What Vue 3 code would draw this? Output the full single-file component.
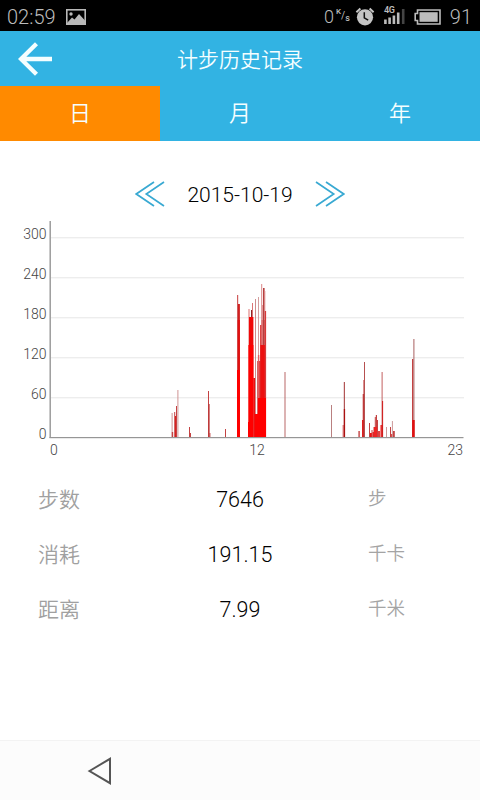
<template>
  <div class="screen">
    <div class="status-bar">
      <span class="clock">02:59</span>
      <svg class="pic-icon" viewBox="0 0 20 16" width="20" height="16">
        <rect x="0.8" y="0.8" width="18.4" height="14.4" fill="none" stroke="#b8b8b8" stroke-width="1.6" />
        <circle cx="5" cy="5" r="1.7" fill="#b8b8b8" />
        <path d="M1 14L6 8.5L8.5 10.5L13 5L19 11.5V15H1Z" fill="#b8b8b8" />
      </svg>
      <span class="speed">0</span>
      <span class="unit"><i>K</i><b>/</b><i class="sec">s</i></span>
      <svg class="alarm" viewBox="0 0 20 19" width="20" height="19">
        <circle cx="10" cy="10.3" r="8.1" fill="#c4c4c4" />
        <path d="M1.4 5.2L5.4 1.6M18.6 5.2L14.6 1.6" stroke="#c4c4c4" stroke-width="2" />
        <path d="M9.3 5.2V10.8L13.2 13.2" fill="none" stroke="#111" stroke-width="1.5" />
      </svg>
      <div class="signal">
        <span class="net">4G</span>
        <svg viewBox="0 0 22 17" width="22" height="17">
          <path d="M1.4 11.5V16M5.6 9.5V16M9.9 7.5V16M14.2 4.5V16" stroke="#bcbcbc" stroke-width="2.6" />
          <path d="M19.2 1V16" stroke="#444" stroke-width="2.6" />
        </svg>
      </div>
      <svg class="battery" viewBox="0 0 27 16" width="27" height="16">
        <path d="M3.5 1H26V15H3.5V11.5H1.2V4.5H3.5Z" fill="none" stroke="#bcbcbc" stroke-width="1.6" />
        <rect x="5.5" y="3.2" width="18.2" height="9.6" fill="#bcbcbc" />
      </svg>
      <span class="percent">91</span>
    </div>

    <div class="header">
      <svg class="back" viewBox="0 0 34 34" width="34" height="34">
        <path d="M18.5 1.8L3 17L18.5 32.2M3 17H34" fill="none" stroke="#f5feff" stroke-width="4.3" />
      </svg>
      <h1 class="title">计步历史记录</h1>
    </div>

    <div class="tabs">
      <div
        v-for="(tab, i) in tabs"
        :key="tab"
        class="tab"
        :class="{ active: activeTab === i }"
        @click="activeTab = i"
      >{{ tab }}</div>
    </div>

    <div class="date-row">
      <svg class="arrows" viewBox="0 0 30 26" width="30" height="26">
        <path d="M19 1L1.3 13L19 25M29 1L11.3 13L29 25" />
      </svg>
      <span class="date">2015-10-19</span>
      <svg class="arrows" viewBox="0 0 30 26" width="30" height="26">
        <path d="M1 1L18.7 13L1 25M11 1L28.7 13L11 25" />
      </svg>
    </div>

    <svg class="chart" viewBox="0 215 480 250" width="480" height="250">
      <g v-for="(v, i) in ticks" :key="v">
        <rect v-if="v" x="51" :y="437 - i * 40" width="413" height="1.4" fill="#ededed" />
        <text x="46.5" :y="438.5 - i * 40" text-anchor="end">{{ v }}</text>
      </g>
      <rect
        v-for="(b, i) in bars"
        :key="'b' + i"
        :x="b[0]"
        :y="b[1]"
        :width="b[2]"
        :height="437.5 - b[1]"
        :fill="b[3] || '#c44242'"
      />
      <rect x="49.5" y="221" width="1.4" height="217" fill="#969696" />
      <rect x="49.5" y="437" width="414" height="1.2" fill="#969696" />
      <text x="50" y="455">0</text>
      <text x="257" y="455" text-anchor="middle">12</text>
      <text x="463" y="455" text-anchor="end">23</text>
    </svg>

    <div class="stats">
      <div v-for="s in stats" :key="s.label" class="stat">
        <span class="label">{{ s.label }}</span>
        <span class="value">{{ s.value }}</span>
        <span class="stat-unit">{{ s.unit }}</span>
      </div>
    </div>

    <div class="nav-bar">
      <svg viewBox="0 0 26 30" width="26" height="30">
        <path d="M2.5 15L23 2.8V27.2Z" fill="none" stroke="#555" stroke-width="2" />
      </svg>
    </div>
  </div>
</template>

<script setup>
import { ref } from 'vue'

const tabs = ['日', '月', '年']
const activeTab = ref(0)

const ticks = [0, 60, 120, 180, 240, 300]

const stats = [
  { label: '步数', value: '7646', unit: '步' },
  { label: '消耗', value: '191.15', unit: '千卡' },
  { label: '距离', value: '7.99', unit: '千米' },
]

// x, top, width, color
const bars = [
  [171.6, 413, 1, '#cf9494'],
  [171.8, 432, 1.4],
  [174.2, 412, 1],
  [175, 416, 1.2, '#d82020'],
  [176, 406, 1],
  [177.4, 390, 1, '#cf9494'],
  [189, 427, 1],
  [190, 433, 1],
  [208, 391, 1],
  [208.6, 404, 1, '#b83030'],
  [209.4, 433, 1],
  [225, 429, 1],
  [237, 295, 1.2, '#d05c5c'],
  [238, 304, 1.9, '#d02020'],
  [237.7, 320, 2.1, '#e01010'],
  [237, 370, 2.9, '#f00'],
  [248.5, 309, 1, '#dd7474'],
  [248, 422, 2, '#f00'],
  [251, 310, 1.2, '#8e2626'],
  [252, 303, 1, '#dd7474'],
  [249, 317, 4.4, '#f00808'],
  [248.4, 345, 5, '#f00'],
  [253.3, 378, 1.8, '#ee1010'],
  [255.1, 299, 0.9, '#c98080'],
  [255, 414, 2, '#f00'],
  [257, 361, 1.2, '#d86060'],
  [258, 297, 0.9, '#cf9494'],
  [257.9, 355, 1.4, '#e06060'],
  [259.2, 361, 1.2, '#e02020'],
  [260.2, 325, 1.6, '#d81818'],
  [261.2, 284, 1, '#d88'],
  [261.8, 320, 3.2, '#e41818'],
  [262.2, 305, 1, '#d88'],
  [263, 288, 1.6, '#b54040'],
  [264.5, 291, 0.8, '#d88'],
  [264.8, 311, 1.3, '#d83838'],
  [260.4, 345, 4.4, '#ec1010'],
  [258, 398, 8, '#f00'],
  [257, 414, 2, '#f00'],
  [284.5, 372, 1, '#b96868'],
  [331, 405, 1, '#b98080'],
  [342.6, 425, 1.2, '#e07070'],
  [343.8, 382, 1.1, '#a44'],
  [343.8, 409, 1.3, '#a11'],
  [358.4, 431, 1.4],
  [362, 420, 2.8, '#e11'],
  [362.7, 394, 1.2],
  [363.5, 380, 1.2, '#b92020'],
  [364, 362, 1, '#b65050'],
  [369, 423, 1],
  [370, 433, 2, '#e11'],
  [371.5, 430, 1],
  [372.5, 432, 2, '#e11'],
  [373.5, 427, 1],
  [374.8, 417, 1],
  [375.8, 415, 1.2],
  [374, 427, 3, '#e22'],
  [377, 420, 1],
  [378, 431, 2, '#e04040'],
  [380.5, 425, 2.4, '#e11'],
  [381.6, 372, 1, '#c46060'],
  [382.1, 401, 1, '#d01818'],
  [386, 427, 1, '#c99'],
  [390, 427, 1],
  [391, 434, 2, '#d44'],
  [391.9, 421, 1, '#c99'],
  [393, 431, 1.8],
  [412, 359, 1.3],
  [413.4, 339, 1, '#a96060'],
  [412.2, 420, 2.5, '#e01010'],
]
</script>

<style>
body {
  margin: 0;
  background: #fff;
}
</style>

<style scoped>
.screen {
  width: 480px;
  height: 800px;
  display: flex;
  flex-direction: column;
  overflow: hidden;
  background: #fff;
  font-family: Roboto, "Noto Sans CJK SC", sans-serif;
  font-weight: 300;
}

.status-bar {
  height: 31px;
  flex: none;
  box-sizing: border-box;
  display: flex;
  align-items: center;
  padding: 2px 8px 0 7px;
  background: #000;
  color: #bcbcbc;
  font-size: 20px;
}

.clock { width: 59px; }
.speed { margin-left: 238px; width: 12px; font-size: 18px; }

.unit {
  width: 19px;
  display: flex;
  font-size: 8px;
  line-height: 10px;
}

.unit i { font-style: normal; font-weight: 500; margin-top: -4px; }
.unit b { font-weight: 400; font-size: 10px; }
.unit .sec { margin-top: 2px; font-size: 9px; }

.alarm { margin-right: 9px; }

.signal {
  position: relative;
  height: 17px;
  width: 22px;
  margin-right: 8px;
}

.signal svg { display: block; }

.net {
  position: absolute;
  left: 0;
  top: -2px;
  font-size: 9px;
  line-height: 9px;
  font-weight: 600;
  letter-spacing: -0.5px;
}

.percent { margin-left: auto; }

.header {
  height: 55px;
  flex: none;
  display: flex;
  align-items: center;
  background: #32b3e3;
}

.back { margin-left: 18px; }

.title {
  flex: 1;
  margin: 0 52px 2px 0;
  color: #f5feff;
  font-size: 21px;
  font-weight: 350;
  text-align: center;
}

.tabs {
  height: 55px;
  flex: none;
  display: flex;
  background: #32b3e3;
}

.tab {
  flex: 1;
  line-height: 56px;
  text-align: center;
  color: #f5feff;
  font-size: 22px;
  font-weight: 350;
}

.tab.active { background: #ff8a00; }

.date-row {
  height: 74px;
  flex: none;
  box-sizing: border-box;
  padding-top: 33px;
  display: flex;
  justify-content: center;
  align-items: center;
  gap: 22px;
}

.date {
  color: #000;
  font-size: 21px;
}

.arrows {
  margin-bottom: 2px;
}

.arrows path {
  fill: none;
  stroke: #39a9d2;
  stroke-width: 1.7;
}

.chart {
  flex: none;
  display: block;
}

.chart text {
  fill: #444;
  font-size: 14px;
}

.stats {
  padding-top: 7px;
}

.stat {
  height: 55px;
  display: grid;
  grid-template-columns: 130px 144px 1fr;
  align-items: center;
  padding-left: 38px;
}

.label {
  padding-bottom: 4px;
  color: #a0a0a0;
  font-size: 21px;
  font-weight: 350;
}

.value {
  color: #000;
  font-size: 21.5px;
  text-align: center;
}

.stat-unit {
  padding: 0 0 5px 56px;
  color: #a4a4a4;
  font-size: 18.5px;
  font-weight: 350;
}

.nav-bar {
  height: 60px;
  flex: none;
  box-sizing: border-box;
  margin-top: auto;
  padding-left: 87px;
  display: flex;
  align-items: center;
  border-top: 1px solid #f3f3f3;
  background: #fcfcfc;
}
</style>
